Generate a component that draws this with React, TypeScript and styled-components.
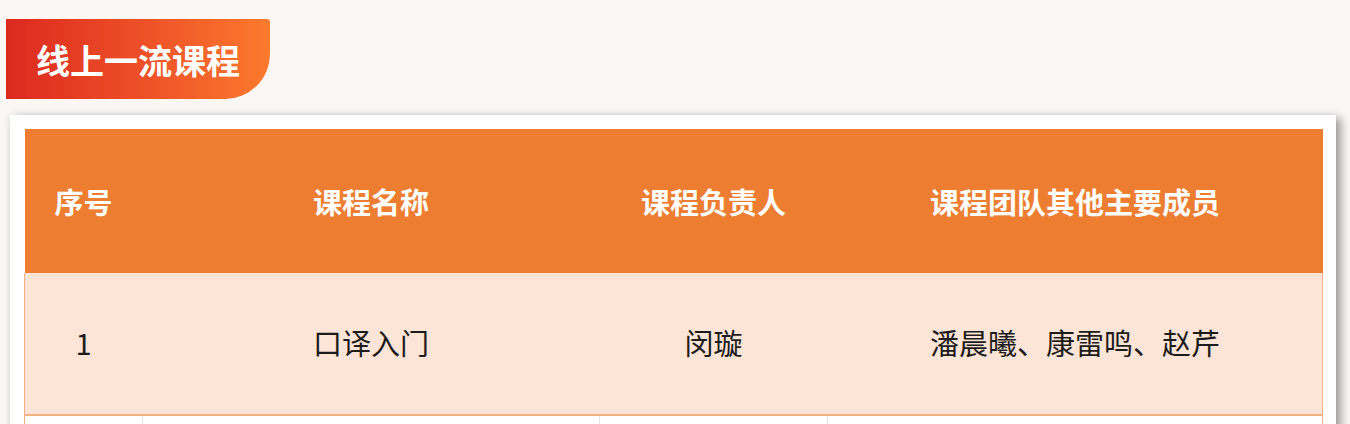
import React from "react";
import styled, { createGlobalStyle } from "styled-components";

const GlobalStyle = createGlobalStyle`
  html, body {
    margin: 0;
    padding: 0;
    background: #fbf7f4;
    font-family: "Noto Sans CJK SC", "Noto Sans", sans-serif;
  }
`;

const Page = styled.div`
  display: flex;
  flex-direction: column;
  align-items: flex-start;
  padding: 19px 0 0 6px;
`;

const Tab = styled.div`
  width: 264px;
  height: 80px;
  box-sizing: border-box;
  display: flex;
  align-items: center;
  padding-left: 30px;
  background: linear-gradient(90deg, #dc291f 0%, #ee5328 55%, #fc7a2d 100%);
  border-radius: 0 3px 45px 0;
  color: #ffffff;
  font-size: 34px;
  font-weight: 700;
`;

const Card = styled.div`
  margin: 16px 0 0 4px;
  width: 1326px;
  box-sizing: border-box;
  padding: 14px;
  background: #ffffff;
  box-shadow: 5px 3px 9px rgba(0, 0, 0, 0.38), -2px -1px 6px rgba(0, 0, 0, 0.05);
`;

const Table = styled.table`
  width: 1298px;
  border-collapse: collapse;
  table-layout: fixed;
`;

const HeadCell = styled.th<{ $w: number }>`
  width: ${(p) => p.$w}px;
  height: 144px;
  padding: 0;
  background: #ed7d31;
  color: #ffffff;
  font-size: 29px;
  font-weight: 700;
  text-align: center;
  vertical-align: middle;
`;

const BodyCell = styled.td<{ $alt?: boolean }>`
  height: ${(p) => (p.$alt ? "60px" : "142px")};
  padding: 0 0 ${(p) => (p.$alt ? "0" : "4px")};
  box-sizing: border-box;
  background: ${(p) => (p.$alt ? "#ffffff" : "#fce4d6")};
  color: #1c1c1c;
  font-size: 29px;
  font-weight: 400;
  text-align: center;
  vertical-align: middle;
  border-left: 1px solid ${(p) => (p.$alt ? "#e6e6e6" : "#fce4d6")};
  border-bottom: ${(p) => (p.$alt ? "none" : "2px solid #f4b183")};
  &:first-child {
    border-left: 1px solid #f4b183;
  }
  &:last-child {
    border-right: 1px solid #f4b183;
  }
`;

const columns = [
  { title: "序号", w: 118 },
  { title: "课程名称", w: 457 },
  { title: "课程负责人", w: 228 },
  { title: "课程团队其他主要成员", w: 495 },
];

const rows = [["1", "口译入门", "闵璇", "潘晨曦、康雷鸣、赵芹"]];

export default function App() {
  return (
    <>
      <GlobalStyle />
      <Page>
        <Tab>线上一流课程</Tab>
        <Card>
          <Table>
            <thead>
              <tr>
                {columns.map((c) => (
                  <HeadCell key={c.title} $w={c.w}>
                    {c.title}
                  </HeadCell>
                ))}
              </tr>
            </thead>
            <tbody>
              {rows.map((r, i) => (
                <tr key={i}>
                  {r.map((v, j) => (
                    <BodyCell key={j}>{v}</BodyCell>
                  ))}
                </tr>
              ))}
              <tr>
                {columns.map((c) => (
                  <BodyCell key={c.title} $alt>
                    {""}
                  </BodyCell>
                ))}
              </tr>
            </tbody>
          </Table>
        </Card>
      </Page>
    </>
  );
}
